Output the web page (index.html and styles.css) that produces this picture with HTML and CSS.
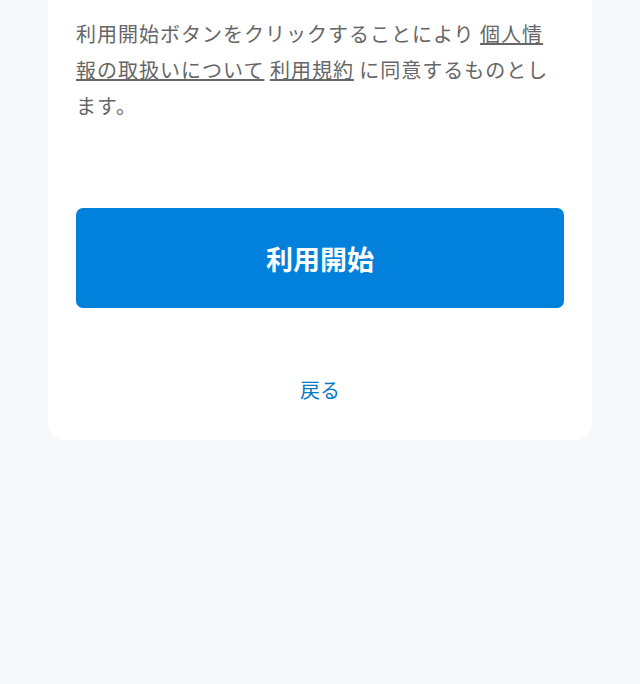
FILE: index.html
```html
<!DOCTYPE html>
<html lang="ja">
<head>
<meta charset="utf-8">
<title>利用開始</title>
<link rel="stylesheet" href="styles.css">
</head>
<body>
<main class="page">
  <section class="card">
    <p class="notice">利用開始ボタンをクリックすることにより <a class="link" href="#">個人情報の取扱いについて</a> <a class="link" href="#">利用規約</a> に同意するものとします。</p>
    <button class="primary" type="button">利用開始</button>
    <a class="back" href="#">戻る</a>
  </section>
</main>
</body>
</html>
```
FILE: styles.css
```css
html, body {
  margin: 0;
  padding: 0;
  background: #f7f8fa;
}
body {
  font-family: "Noto Sans CJK JP", "Noto Sans", sans-serif;
  height: 684px;
}
.page {
  padding: 0 48px;
}
.card {
  background: #ffffff;
  border-radius: 0 0 16px 16px;
  padding: 16px 28px 35px;
  display: flex;
  flex-direction: column;
}
.notice {
  margin: 0;
  font-size: 20px;
  letter-spacing: 1px;
  line-height: 36px;
  color: #666666;
}
.link {
  color: #666666;
  text-decoration: underline;
  text-decoration-thickness: 1.5px;
  text-underline-offset: 1px;
}
.primary {
  margin-top: 84px;
  height: 100px;
  border: none;
  border-radius: 7px;
  background: #0180dc;
  color: #ffffff;
  font-family: inherit;
  font-size: 27px;
  font-weight: 700;
  cursor: pointer;
}
.back {
  margin-top: 67px;
  align-self: center;
  font-size: 20px;
  line-height: 30px;
  color: #0a78c8;
  text-decoration: none;
}
```
